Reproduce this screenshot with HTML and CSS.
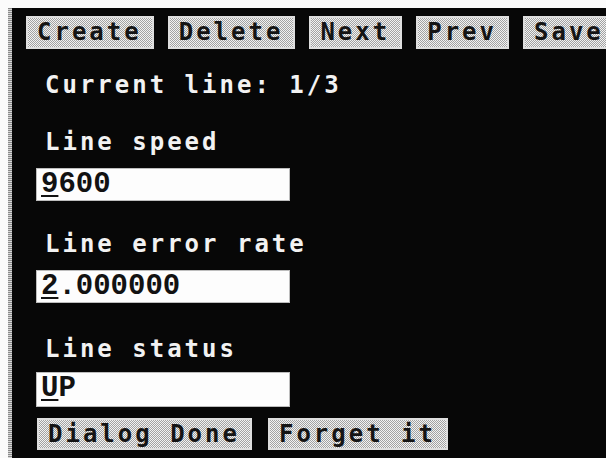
FILE: index.html
```html
<!DOCTYPE html>
<html lang="en">
<head>
<meta charset="utf-8">
<title>Line settings</title>
<link rel="stylesheet" href="styles.css">
</head>
<body>
<div class="frame">
  <div class="rail"></div>
  <main class="panel">
    <div class="toolbar">
      <button class="btn">Create</button>
      <button class="btn">Delete</button>
      <button class="btn">Next</button>
      <button class="btn">Prev</button>
      <button class="btn">Save</button>
    </div>
    <p class="label current">Current line: 1/3</p>

    <p class="label gap-a">Line speed</p>
    <div class="field"><span class="caret">9</span>600</div>

    <p class="label gap-b">Line error rate</p>
    <div class="field"><span class="caret">2</span>.000000</div>

    <p class="label gap-c">Line status</p>
    <div class="field tall"><span class="caret">U</span>P</div>

    <div class="actions">
      <button class="btn">Dialog Done</button>
      <button class="btn">Forget it</button>
    </div>
  </main>
</div>
</body>
</html>
```

FILE: styles.css
```css
html, body {
  margin: 0;
  padding: 0;
  background: #fbfbfb;
  width: 606px;
  height: 458px;
  overflow: hidden;
}

.frame {
  display: flex;
  height: 450px;
  margin-top: 8px;
  padding-left: 8px;
}

/* striped window edge on the left */
.rail {
  width: 4px;
  flex: none;
  background: repeating-linear-gradient(to bottom, #8a8a8a 0 1px, #d8d8d8 1px 2px);
}

.panel {
  flex: 1;
  background: #070707;
  padding: 8px 0 0 14px;
  overflow: hidden;
  font-family: "DejaVu Sans Mono", monospace;
  font-weight: bold;
}

.toolbar {
  display: flex;
  gap: 14px;
  white-space: nowrap;
}

.btn {
  flex: none;
  height: 33px;
  margin: 0;
  padding: 0 10px 0 9px;
  border: 2px solid #dedede;
  background: repeating-conic-gradient(#f2f2f2 0 25%, #a2a2a2 0 50%) 0 0 / 2px 2px;
  color: #141414;
  font-family: "DejaVu Sans Mono", monospace;
  font-weight: bold;
  font-size: 24px;
  letter-spacing: 3px;
  line-height: 29px;
  text-align: left;
}

.label {
  margin: 0 0 0 19px;
  color: #f2f2f2;
  font-size: 24px;
  letter-spacing: 3px;
  line-height: 24px;
  white-space: nowrap;
}

.current { margin-top: 24px; }
.gap-a { margin-top: 33px; }
.gap-b { margin-top: 31px; }
.gap-c { margin-top: 34px; }

.field {
  box-sizing: border-box;
  width: 254px;
  height: 33px;
  margin: 14px 0 0 10px;
  padding-left: 4px;
  background: #fdfdfd;
  border: 1px solid #bdbdbd;
  color: #121212;
  font-family: "Liberation Mono", monospace;
  font-weight: bold;
  font-size: 29px;
  line-height: 32px;
  white-space: nowrap;
}

.field.tall {
  height: 35px;
  margin-top: 11px;
}

.caret {
  text-decoration: underline;
  text-decoration-thickness: 2px;
  text-underline-offset: 3px;
}

.actions {
  display: flex;
  gap: 16px;
  margin: 11px 0 0 11px;
}

.actions .btn {
  height: 32px;
}
```
